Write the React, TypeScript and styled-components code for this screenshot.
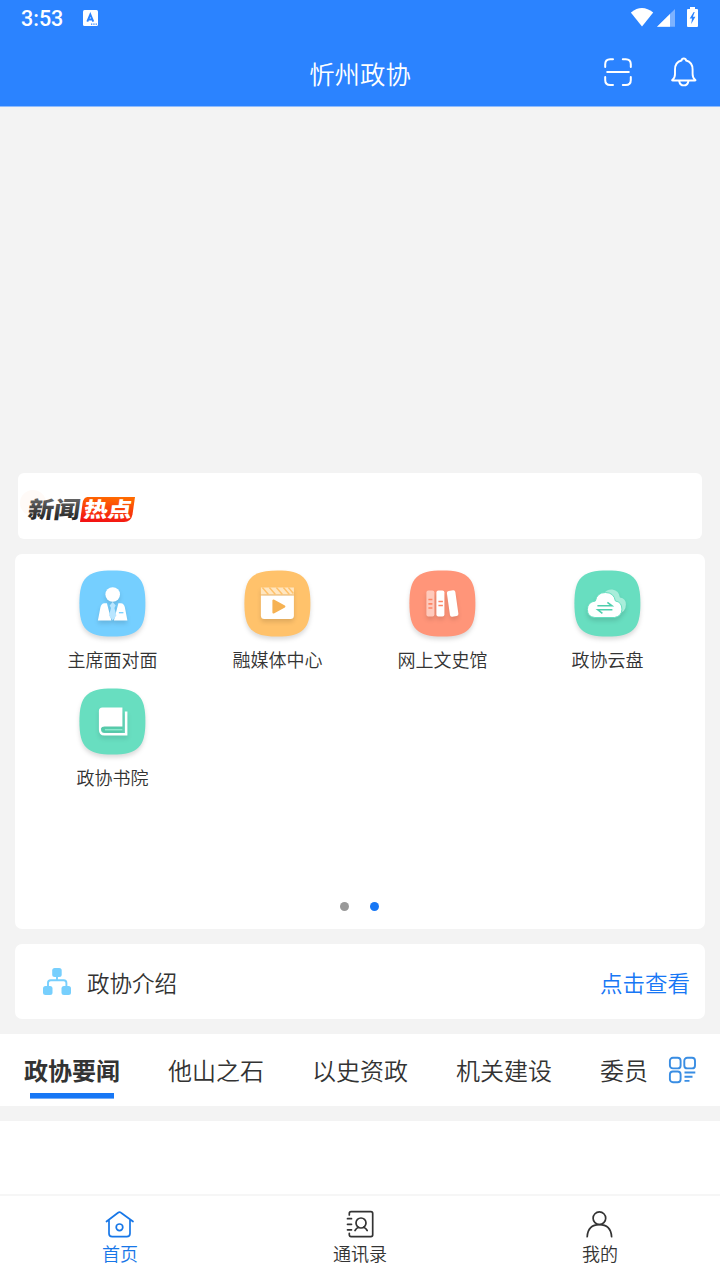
import React from 'react';
import styled, { createGlobalStyle } from 'styled-components';

const GlobalStyle = createGlobalStyle`
  *, *::before, *::after { box-sizing: border-box; }
  body {
    margin: 0;
    background: #f3f3f3;
    color: #333;
    font-family: Roboto, 'Noto Sans CJK SC', sans-serif;
    font-weight: 350;
  }
  svg { display: block; flex: none; }
`;

const Screen = styled.div`
  width: 720px;
  height: 1280px;
  display: flex;
  flex-direction: column;
  overflow: hidden;
  background: #f3f3f3;
`;

const Header = styled.header`
  height: 107px;
  flex: none;
  background: #2b83ff;
  border-bottom: 1px solid #8fbcfd;
  color: #fff;
`;

const StatusBar = styled.div`
  height: 36px;
  display: flex;
  align-items: center;
  padding: 0 21px;
`;

const Clock = styled.span`
  width: 62px;
  padding-top: 2px;
  font: 500 21.5px/34px Roboto, sans-serif;
`;

const StatusIcons = styled.div`
  margin-left: auto;
  display: flex;
  align-items: center;
`;

const TitleBar = styled.div`
  height: 70px;
  display: grid;
  grid-template-columns: 1fr auto 1fr;
  align-items: center;
`;

const Title = styled.h1`
  grid-column: 2;
  margin: 8px 0 0;
  font-size: 25.4px;
  font-weight: 350;
  line-height: 36px;
`;

const TitleActions = styled.div`
  display: flex;
  justify-content: flex-end;
  align-items: center;
  gap: 38px;
  padding: 1px 22px 0 0;
`;

const Banner = styled.div`
  height: 366px;
  flex: none;
`;

const NewsCard = styled.section`
  height: 66px;
  flex: none;
  margin: 0 18px;
  border-radius: 6px;
  background: #fff;
`;

const LogoText = styled.text`
  font-family: 'Noto Sans CJK SC', sans-serif;
  font-weight: 900;
  font-size: 23px;
`;

const ServiceCard = styled.section`
  height: 375px;
  flex: none;
  margin: 15px 15px 0;
  padding: 15px 15px 18px;
  border-radius: 7px;
  background: #fff;
  display: flex;
  flex-direction: column;
  justify-content: space-between;
`;

const ServiceGrid = styled.div`
  display: grid;
  grid-template-columns: repeat(4, 165px);
  grid-auto-rows: 118px;
`;

const Service = styled.div`
  display: flex;
  flex-direction: column;
  align-items: center;
`;

const ServiceLabel = styled.span`
  font-size: 18px;
  line-height: 26px;
  margin-top: -1px;
`;

const Dots = styled.div`
  display: flex;
  justify-content: center;
  gap: 21px;
  padding-right: 1px;
`;

const Dot = styled.i<{ $active?: boolean }>`
  width: 9px;
  height: 9px;
  border-radius: 50%;
  background: ${(p) => (p.$active ? '#1777f5' : '#999')};
`;

const IntroCard = styled.section`
  height: 75px;
  flex: none;
  margin: 15px 15px 0;
  padding: 0 15px 0 27px;
  border-radius: 7px;
  background: #fff;
  display: flex;
  align-items: center;
  font-size: 22.5px;
  line-height: 32px;
`;

const IntroTitle = styled.span`
  margin-left: 15px;
  padding-top: 4px;
`;

const IntroLink = styled.a`
  margin-left: auto;
  padding-top: 4px;
  color: #1777f5;
`;

const TabBar = styled.nav`
  height: 72px;
  flex: none;
  margin-top: 15px;
  background: #fff;
  display: flex;
`;

const TabList = styled.div`
  width: 648px;
  padding-left: 24px;
  display: flex;
  gap: 48px;
`;

const Tab = styled.div<{ $active?: boolean }>`
  flex: none;
  padding-top: 21px;
  display: flex;
  flex-direction: column;
  align-items: center;
  font-size: 24px;
  line-height: 34px;
  white-space: nowrap;
  font-weight: ${(p) => (p.$active ? 700 : 350)};
`;

const TabUnderline = styled.i`
  width: 84px;
  height: 6px;
  margin-top: 4px;
  background: linear-gradient(#1777f5 5px, #74adf9 5px);
`;

const TabMenu = styled.div`
  padding: 22px 0 0 20px;
`;

const Feed = styled.main`
  flex: 1;
  margin-top: 15px;
  background: #fff;
`;

const BottomNav = styled.nav`
  height: 86px;
  flex: none;
  background: #fff;
  border-top: 2px solid #f6f6f6;
  display: flex;
`;

const NavItem = styled.div<{ $active?: boolean }>`
  flex: 1;
  padding-top: 13px;
  display: flex;
  flex-direction: column;
  align-items: center;
  font-size: 18px;
  line-height: 26px;
  color: ${(p) => (p.$active ? '#1777e8' : '#333')};

  span { margin-top: 3px; }
`;

const KeyboardIcon = () => (
  <svg width="15" height="16" viewBox="0 0 15 16">
    <rect width="15" height="16" rx="1.5" fill="#fff" />
    <path d="M4.300 11.700 7.300 4.500 10.300 11.700M5.400 9.500h3.800" fill="none" stroke="#2b83ff" strokeWidth="1.900" />
    <path d="M8 14.200h1.300m1 0h1.300m1 0h1.300" stroke="#2b83ff" strokeWidth="1.200" />
  </svg>
);

const SignalIcons = () => (
  <svg width="68" height="22" viewBox="631 7 68 22">
    <path d="M630.800 12.600Q642 3.600 653.200 12.600L642 26.500Z" fill="#fff" />
    <path d="M675 9v17.700h-18z" fill="#7db2ff" />
    <path d="M670 14v12.700h-13z" fill="#fff" />
    <path d="M690 7h5v2h2q1 0 1 1v16q0 1-1 1h-9q-1 0-1-1v-16q0-1 1-1h2z" fill="#fff" />
    <path d="M693.700 12 689.700 18.500h2.300l-.8 5.500 4.200-7.300h-2.500l1.800-4.700z" fill="#2b83ff" />
  </svg>
);

const ScanIcon = () => (
  <svg width="28" height="28" viewBox="0 0 28 28" fill="none" stroke="#fff" strokeWidth="2" strokeLinecap="round">
    <path d="M1.200 9V6.200q0-5 5-5H9M18.800 1.200h3q5 0 5 5V9M26.800 19v3q0 5-5 5h-3M9 27H6.200q-5 0-5-5v-3M3.200 14h21.600" />
  </svg>
);

const BellIcon = () => (
  <svg width="28" height="30" viewBox="0 0 28 30" fill="none" stroke="#fff" strokeWidth="1.900" strokeLinejoin="round" strokeLinecap="round">
    <path d="M2.500 22.700Q5 21 5 17v-4.500q0-7.300 6.500-9 .3-2 2.300-2t2.300 2q6.500 1.700 6.500 9V17q0 4 2.500 5.700.9.800-.3.800H2.800q-1.200 0-.3-.8ZM9.200 24.200q.8 4.200 4.600 4.200t4.600-4.200" />
  </svg>
);

const NewsLogo = () => (
  <svg width="130" height="66" viewBox="18 473 130 66">
    <defs>
      <linearGradient id="ink" x1="0" y1="0" x2="0" y2="1">
        <stop offset="0.2" stopColor="#686868" />
        <stop offset="0.8" stopColor="#2a2a2a" />
      </linearGradient>
      <linearGradient id="hot" x1="0.6" y1="0" x2="0.4" y2="1">
        <stop offset="0" stopColor="#ff6a00" />
        <stop offset="1" stopColor="#f31313" />
      </linearGradient>
    </defs>
    <circle cx="33" cy="503" r="13" fill="#fffaf7" />
    <path d="M87.500 497H135l-2.500 17.500Q131 522 124 522H80l2.500-18.500Q83.500 497 87.500 497Z" fill="url(#hot)" />
    <LogoText transform="translate(27 517.500) skewX(-8)" textLength="52" lengthAdjust="spacingAndGlyphs" fill="url(#ink)">新闻</LogoText>
    <LogoText transform="translate(83 516.800) skewX(-8) scale(1 .9)" textLength="48" lengthAdjust="spacingAndGlyphs" fill="#fff">热点</LogoText>
  </svg>
);

const SQUIRCLE = 'M33 0C58.500 0 66 7.500 66 33S58.500 66 33 66 0 58.500 0 33 7.500 0 33 0Z';

const ServiceIcon = ({ color, children }: { color: string; children: React.ReactNode }) => (
  <svg width="79" height="80" viewBox="-6.400 -1.500 79 80">
    <path d={SQUIRCLE} fill={color} style={{ filter: 'drop-shadow(0 3px 2px rgba(0,0,0,.14))' }} />
    <g style={{ filter: 'drop-shadow(0 3px 2px rgba(0,0,0,.12))' }}>{children}</g>
  </svg>
);

const services = [
  {
    label: '主席面对面',
    color: '#75cfff',
    art: (
      <>
        <circle cx="33.300" cy="24" r="7.300" fill="#fff" />
        <path d="M18.500 50 21 37q.8-4 4-4.200h2.500L32 50ZM48 50l-2.500-13q-.8-4-4-4.200H39L34.500 50Z" fill="#fff" />
        <path d="m33.300 31.500 3 3.500-1.300 2.500 2 7.500-3.700 5-3.700-5 2-7.500-1.300-2.500z" fill="#b9e6ff" />
        <path d="M39.500 42.200h4.500" stroke="#75cfff" strokeWidth="1.300" />
      </>
    ),
  },
  {
    label: '融媒体中心',
    color: '#ffc26b',
    art: (
      <>
        <path d="M16.500 17h33v7h-33z" fill="#ffe6c0" />
        <path d="m18 17 6 7m1-7 6 7m1-7 6 7m1-7 6 7m-1-7 5 6" stroke="#ffc26b" strokeWidth="1.500" />
        <path d="M16.500 25h33v20q0 3.500-3.500 3.500H20q-3.500 0-3.500-3.500z" fill="#fff" />
        <path d="M29 30v12l11-6z" fill="#f6b253" stroke="#f6b253" strokeWidth="2" strokeLinejoin="round" />
      </>
    ),
  },
  {
    label: '网上文史馆',
    color: '#ff9579',
    art: (
      <>
        <rect x="17" y="20" width="8" height="26" rx="2" fill="#ffcabc" />
        <rect x="27" y="20" width="8" height="26" rx="2" fill="#fff" />
        <rect x="39" y="20" width="8.500" height="26" rx="2" fill="#fff" transform="rotate(-8 43.200 33)" />
        <path d="M19 29h4m-4 4.300h4M19 37.500h4M29 31h4.500M29 35h4.500" stroke="#ff8564" strokeWidth="1.700" />
      </>
    ),
  },
  {
    label: '政协云盘',
    color: '#68dec0',
    art: (
      <>
        <path d="M29.500 23q3-4.500 8.500-4 6.500 1 7.500 8 6 1 6 7 0 8-8 9H32z" fill="#a9edda" />
        <path d="M20.500 47q-7.500-.5-7.500-8t8-8.500Q22.500 22 31 22T41 30.500q6.500 1 6.500 8.200T40 47Z" fill="#fff" stroke="#68dec0" strokeWidth="1" />
        <path d="M23 35.300h14.500l-4.500-3.500M38 39.300H23.500l4.500 3.500" fill="none" stroke="#4fcfad" strokeWidth="1.600" />
      </>
    ),
  },
  {
    label: '政协书院',
    color: '#68dec0',
    art: (
      <>
        <path d="M23 19h20v19H25q-3 0-3.500 2 0 4.500 3.500 4.500h20.500V23h2.500v24H25q-5.500 0-5.500-6V22.500q0-3.500 3.500-3.500Z" fill="#fff" />
        <path d="M25 38.800h18v4.700H25q-2.300 0-2.300-2.300T25 38.800Z" fill="#53cba9" />
        <path d="M25.500 41.200H43" stroke="#8de8cf" strokeWidth="1.500" />
      </>
    ),
  },
];

const OrgIcon = () => (
  <svg width="30" height="30" viewBox="0 0 30 30" fill="#77cffd">
    <rect x="10.200" y="1" width="9.500" height="9" rx="2.500" />
    <rect x="1" y="19" width="9.500" height="9" rx="2.500" />
    <rect x="19.500" y="19" width="9.500" height="9" rx="2.500" />
    <path d="M15 9v5M6 20v-4q0-2.700 2.700-2.700h13q2.700 0 2.700 2.700v4" fill="none" stroke="#77cffd" strokeWidth="1.900" />
  </svg>
);

const CategoryIcon = () => (
  <svg width="29" height="28" viewBox="0 0 29 28" fill="none" stroke="#398de3" strokeWidth="1.900">
    <rect x="1.900" y="1.700" width="10.700" height="10.700" rx="3" />
    <rect x="16.300" y="1.700" width="10.700" height="10.700" rx="3" />
    <rect x="1.900" y="15.500" width="10.700" height="10.700" rx="3" />
    <path d="M16.500 16.500h10.800M16.500 20.700h8M16.500 24.900h5" />
  </svg>
);

const HomeIcon = () => (
  <svg width="31" height="30" viewBox="0.500 0.500 31 30" fill="none" stroke="#1777e8" strokeWidth="1.700" strokeLinejoin="round" strokeLinecap="round">
    <path d="M2 13 13.500 4.200q1.500-1.200 3 0L28.500 13M4.500 11.500V25q0 3.200 3.200 3.200h14.600q3.200 0 3.200-3.200V11.500" />
    <circle cx="15" cy="18.800" r="3.300" />
  </svg>
);

const ContactsIcon = () => (
  <svg width="30" height="30" viewBox="0 0 30 30" fill="none" stroke="#333" strokeWidth="1.700" strokeLinecap="round">
    <path d="M4.300 6V4.500q0-1.800 1.800-1.800h19.800q1.800 0 1.800 1.800v21.300q0 1.800-1.800 1.800H6.100q-1.800 0-1.800-1.800V24.300M2.500 9.700h4M2.500 15.300h4M2.500 20.800h4" />
    <circle cx="16" cy="14" r="5" />
    <path d="M10 21.500q1.300-2.500 3.600-3.300M22.200 21.500q-1.300-2.500-3.600-3.300" />
  </svg>
);

const UserIcon = () => (
  <svg width="30" height="30" viewBox="0 0 30 30" fill="none" stroke="#333" strokeWidth="1.700" strokeLinecap="round">
    <circle cx="14.400" cy="9.200" r="6.300" />
    <path d="M2.200 27.700Q3 15.600 14.400 15.600T26.600 27.700" />
  </svg>
);

const tabs = ['政协要闻', '他山之石', '以史资政', '机关建设', '委员'];

export default function App() {
  return (
    <Screen>
      <GlobalStyle />
      <Header>
        <StatusBar>
          <Clock>3:53</Clock>
          <KeyboardIcon />
          <StatusIcons>
            <SignalIcons />
          </StatusIcons>
        </StatusBar>
        <TitleBar>
          <Title>忻州政协</Title>
          <TitleActions>
            <ScanIcon />
            <BellIcon />
          </TitleActions>
        </TitleBar>
      </Header>
      <Banner />
      <NewsCard>
        <NewsLogo />
      </NewsCard>
      <ServiceCard>
        <ServiceGrid>
          {services.map((s) => (
            <Service key={s.label}>
              <ServiceIcon color={s.color}>{s.art}</ServiceIcon>
              <ServiceLabel>{s.label}</ServiceLabel>
            </Service>
          ))}
        </ServiceGrid>
        <Dots>
          <Dot />
          <Dot $active />
        </Dots>
      </ServiceCard>
      <IntroCard>
        <OrgIcon />
        <IntroTitle>政协介绍</IntroTitle>
        <IntroLink>点击查看</IntroLink>
      </IntroCard>
      <TabBar>
        <TabList>
          {tabs.map((t, i) => (
            <Tab key={t} $active={i === 0}>
              {t}
              {i === 0 && <TabUnderline />}
            </Tab>
          ))}
        </TabList>
        <TabMenu>
          <CategoryIcon />
        </TabMenu>
      </TabBar>
      <Feed />
      <BottomNav>
        <NavItem $active>
          <HomeIcon />
          <span>首页</span>
        </NavItem>
        <NavItem>
          <ContactsIcon />
          <span>通讯录</span>
        </NavItem>
        <NavItem>
          <UserIcon />
          <span>我的</span>
        </NavItem>
      </BottomNav>
    </Screen>
  );
}
